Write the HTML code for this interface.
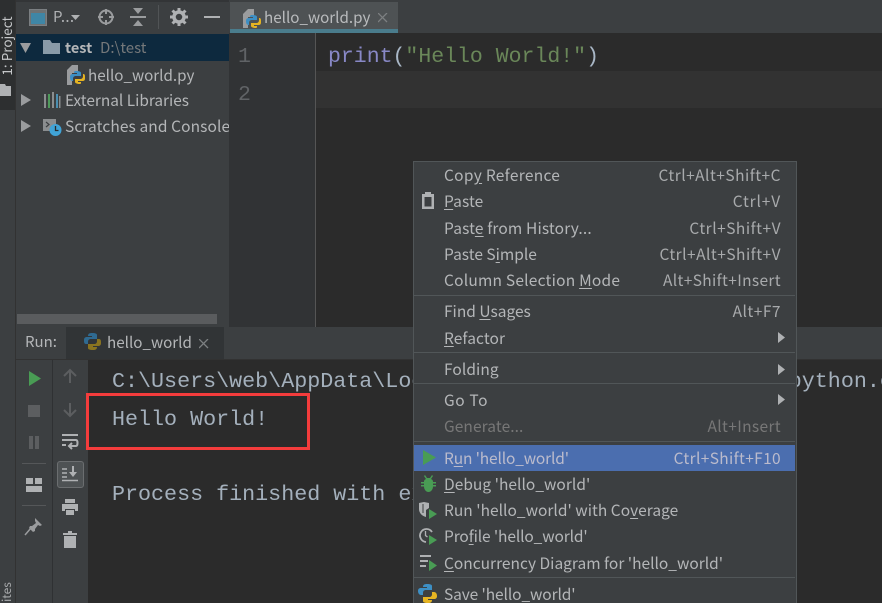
<!DOCTYPE html>
<html><head><meta charset="utf-8">
<style>
html,body{margin:0;padding:0;background:#2b2b2b}
#p{position:relative;width:882px;height:603px;overflow:hidden;background:#2b2b2b;font-family:"Noto Sans CJK SC","Liberation Sans",sans-serif;font-size:15px;color:#afb1b3}
#p div,#p svg{position:absolute}
.t{white-space:nowrap;line-height:20px;height:20px}
.m{font-family:"Liberation Mono",monospace;font-size:21.5px;white-space:nowrap;line-height:26px;color:#a9b7c6}
.c{font-size:21.7px;color:#a4b0bc}
.mi{color:#b4b6b8;font-size:15.5px;letter-spacing:.08px;white-space:nowrap;line-height:20px;height:20px;margin-top:-1px}
.sc{color:#a8aaac;font-size:15.5px;letter-spacing:.35px;white-space:nowrap;line-height:20px;height:20px;right:101px;text-align:right;margin-top:-1px}
u{text-underline-offset:2px}
</style></head><body><div id="p">
<!-- left strip -->
<div style="left:0;top:0;width:15px;height:603px;background:#3c3f41"></div>
<div style="left:15px;top:0;width:1px;height:603px;background:#323232"></div>
<div style="left:0;top:0;width:15px;height:110px;background:#2d2f30"></div>
<div class="t" style="left:-24px;top:36px;width:60px;transform:rotate(-90deg);font-size:13.5px;color:#c4c6c8;text-align:center">1: Project</div>
<svg style="left:0;top:82px" width="12" height="14"><path d="M0 2h5l1 2h5v10H0z" fill="#afb1b3"/></svg>
<div class="t" style="left:-3px;top:582px;width:20px;transform:rotate(-90deg);font-size:12px;color:#a9abad">ites</div>

<!-- project panel -->
<div style="left:16px;top:0;width:214px;height:327px;background:#3c3f41"></div>
<div style="left:16px;top:0;width:866px;height:2px;background:#333537"></div>
<svg style="left:29px;top:9px" width="20" height="18"><rect x="0.5" y="0.5" width="17" height="16" fill="#6e7274" stroke="#7b7f82"/><rect x="2" y="4" width="14" height="11" fill="#3f86a6"/></svg>
<div class="t" style="left:53px;top:7px;color:#afb1b3;font-size:15px;letter-spacing:.3px">P...</div>
<svg style="left:71px;top:15px" width="10" height="6"><path d="M0 0h9L4.500 5z" fill="#afb1b3"/></svg>
<svg style="left:97px;top:8px" width="18" height="18" fill="none" stroke="#9a9c9e" stroke-width="2"><circle cx="9" cy="9" r="6.500"/><path d="M9 1v5M9 12v5M1 9h5M12 9h5"/></svg>
<svg style="left:129px;top:7px" width="18" height="20"><path d="M1 10h16" stroke="#9a9c9e" stroke-width="2"/><path d="M4 1h10L9 7zM4 19h10L9 13z" fill="#9a9c9e"/></svg>
<div style="left:158px;top:5px;width:1px;height:24px;background:#515456"></div>
<svg style="left:170px;top:8px" width="18" height="18"><circle cx="9" cy="9" r="5" fill="none" stroke="#afb1b3" stroke-width="3.500"/><path d="M9 0v4M9 14v4M0 9h4M14 9h4M2.500 2.500l3 3M12.500 12.500l3 3M2.500 15.500l3-3M12.500 5.500l3-3" stroke="#afb1b3" stroke-width="3"/></svg>
<div style="left:204px;top:16px;width:16px;height:2px;background:#afb1b3"></div>

<div style="left:16px;top:34px;width:213px;height:27px;background:#0d293e"></div>
<svg style="left:20px;top:43px" width="12" height="11"><path d="M0 0h11L5.500 10z" fill="#9a9c9e"/></svg>
<svg style="left:43px;top:39px" width="18" height="16"><path d="M0 1h7l2 3h8v11H0z" fill="#8a9ba8"/></svg>
<div class="t" style="left:65px;top:38px;font-weight:700;color:#b4b6b8;font-size:14.500px">test</div>
<div class="t" style="left:100px;top:38px;color:#75787a;font-size:15px">D:\test</div>
<!-- file icon -->
<svg style="left:66px;top:64px" width="20" height="22"><path d="M1 9V6l5-5h6v8z" fill="#9a9c9e"/><path d="M1 9h5v12H1z" fill="#9a9c9e"/><path d="M10 7c4 0 5 1 5 2v3h-5c-2 0-3 1-3 3v2c-2 0-3-1-3-4s2-3 4-3h3v-1H8c0-1 0-2 2-2z" fill="#3d8fc4"/><path d="M14 20c-3 0-5-1-5-2v-3h5c2 0 3-1 3-3v-2c2 0 2 1 2 4s-1 3-4 3h-3v1h3c0 1 0 2-1 2z" fill="#e6b422"/></svg>
<div class="t" style="left:88px;top:65px;color:#b4b6b8;font-size:15.2px">hello_world.py</div>
<svg style="left:21px;top:94px" width="11" height="13"><path d="M0 0l10 6-10 6z" fill="#9a9c9e"/></svg>
<svg style="left:43px;top:92px" width="18" height="17"><path d="M1 2h2v14H1z" fill="#8a8d8f"/><path d="M5 2h2v14H5z" fill="#4f9a5b"/><path d="M9 0h2v16H9z" fill="#8a8d8f"/><path d="M13 2h2v14h-2z" fill="#4b8eb0"/><path d="M16 4h1.500v12H16z" fill="#8a8d8f"/></svg>
<div class="t" style="left:65px;top:90px;color:#b4b6b8;font-size:15.4px">External Libraries</div>
<svg style="left:21px;top:120px" width="11" height="13"><path d="M0 0l10 6-10 6z" fill="#9a9c9e"/></svg>
<svg style="left:43px;top:117px" width="20" height="20"><rect x="0" y="2" width="13" height="12" fill="#8a8d8f"/><path d="M3 5l3 2.500L3 10" stroke="#3c3f41" fill="none" stroke-width="1.200"/><circle cx="12.500" cy="13" r="6" fill="#40a3d6"/><path d="M12.500 9v4.500h3" stroke="#2b2b2b" fill="none" stroke-width="1.300"/></svg>
<div class="t" style="left:65px;top:116px;color:#b4b6b8;font-size:15.5px;letter-spacing:.1px;width:164px;overflow:hidden">Scratches and Consoles</div>
<div style="left:17px;top:314px;width:200px;height:10px;background:#5a5c5e"></div>

<!-- tab bar -->
<div style="left:229px;top:0;width:653px;height:33px;background:#3c3f41"></div>
<div style="left:230px;top:2px;width:168px;height:27px;background:#4e5254"></div>
<div style="left:230px;top:29px;width:168px;height:4px;background:#4a7c8c"></div>
<svg style="left:242px;top:8px" width="20" height="21"><path d="M1 9V6l5-5h6v8z" fill="#9a9c9e"/><path d="M1 9h5v11H1z" fill="#9a9c9e"/><path d="M10 7c4 0 5 1 5 2v3h-5c-2 0-3 1-3 3v2c-2 0-3-1-3-4s2-3 4-3h3v-1H8c0-1 0-2 2-2z" fill="#3d8fc4"/><path d="M14 20c-3 0-5-1-5-2v-3h5c2 0 3-1 3-3v-2c2 0 2 1 2 4s-1 3-4 3h-3v1h3c0 1 0 2-1 2z" fill="#e6b422"/></svg>
<div class="t" style="left:264px;top:7px;color:#b9bbbd;font-size:15.2px">hello_world.py</div>
<svg style="left:378px;top:13px" width="10" height="10"><path d="M0 0l9 9M9 0L0 9" stroke="#7d8082" stroke-width="1.300"/></svg>

<!-- editor -->
<div style="left:229px;top:33px;width:87px;height:294px;background:#313335"></div>
<div style="left:315px;top:33px;width:1px;height:294px;background:#555"></div>
<div style="left:316px;top:71px;width:566px;height:37px;background:#323232"></div>
<div class="m" style="left:238px;top:44px;color:#606366">1</div>
<div class="m" style="left:238px;top:82px;color:#606366">2</div>
<div class="m" style="left:328px;top:44px;color:#8888c6">print<span style="color:#a9b7c6">(</span><span style="color:#6a8759">"Hello World!"</span><span style="color:#a9b7c6">)</span></div>

<!-- run panel -->
<div style="left:16px;top:327px;width:866px;height:33px;background:#3c3f41"></div>
<div style="left:66px;top:327px;width:158px;height:32px;background:#313436"></div>
<div style="left:16px;top:359px;width:866px;height:1px;background:#323232"></div>
<div class="t" style="left:25px;top:332px;color:#b4b6b8;font-size:15px">Run:</div>
<svg style="left:83px;top:332px" width="20" height="20"><path d="M9 1c4 0 5 1 5 2v4H8c-2 0-3 1-3 3v2H3c-2 0-2-2-2-4s1-3 3-3h5V4H5c0-2 1-3 4-3z" fill="#2f6a91"/><path d="M10 18c-4 0-5-1-5-2v-4h6c2 0 3-1 3-3V7h2c2 0 2 2 2 4s-1 3-3 3h-5v1h4c0 2-1 3-4 3z" fill="#8a7420"/></svg>
<div class="t" style="left:107px;top:332px;color:#b4b6b8;font-size:15.2px">hello_world</div>
<svg style="left:199px;top:339px" width="10" height="10"><path d="M0 0l9 9M9 0L0 9" stroke="#7d8082" stroke-width="1.300"/></svg>

<div style="left:16px;top:360px;width:72px;height:243px;background:#3c3f41"></div>
<div style="left:52px;top:360px;width:1px;height:243px;background:#2f3133"></div>
<svg style="left:28px;top:371px" width="14" height="15"><path d="M1 0l12 7.500L1 15z" fill="#499c54"/></svg>
<div style="left:28px;top:405px;width:12px;height:12px;background:#5c5e60"></div>
<div style="left:29px;top:436px;width:4px;height:13px;background:#5c5e60"></div>
<div style="left:35px;top:436px;width:4px;height:13px;background:#5c5e60"></div>
<div style="left:22px;top:463px;width:24px;height:1px;background:#555759"></div>
<svg style="left:26px;top:478px" width="17" height="14"><path d="M0 0h7v6H0zM9 0h7v6H9zM0 8h16v6H0z" fill="#afb1b3"/></svg>
<div style="left:22px;top:505px;width:24px;height:1px;background:#555759"></div>
<svg style="left:24px;top:516px" width="20" height="22"><path d="M11 2l7 7-2 1-2-1-3 4 0 2-2 1-4-4 1-2 2 0 4-3-1-2z" fill="#9a9c9e"/><path d="M7 12L1 19" stroke="#9a9c9e" stroke-width="1.500"/></svg>

<svg style="left:63px;top:368px" width="14" height="16"><path d="M7 15V2M1 8l6-6 6 6" fill="none" stroke="#5c5e60" stroke-width="2"/></svg>
<svg style="left:63px;top:402px" width="14" height="16"><path d="M7 1v13M1 8l6 6 6-6" fill="none" stroke="#5c5e60" stroke-width="2"/></svg>
<svg style="left:61px;top:433px" width="18" height="18"><path d="M1 2h16M1 7h14c2 0 2 6 0 6H9" fill="none" stroke="#afb1b3" stroke-width="2"/><path d="M11 10l-3 3 3 3" fill="none" stroke="#afb1b3" stroke-width="2"/><path d="M1 12h4" stroke="#afb1b3" stroke-width="2"/></svg>
<div style="left:57px;top:461px;width:27px;height:27px;background:#4e5254;border:1px solid #6b6e70;border-radius:3px;box-sizing:border-box"></div>
<svg style="left:62px;top:466px" width="16" height="16"><path d="M0 3h5M0 7h5M0 11h5M0 14.500h16" stroke="#afb1b3" stroke-width="1.600"/><path d="M11 0v8" stroke="#afb1b3" stroke-width="2"/><path d="M7 6h8l-4 5z" fill="#afb1b3"/></svg>
<svg style="left:62px;top:499px" width="16" height="16"><path d="M3 0h10v4H3zM0 5h16v7h-3v-2H3v2H0zM4 11h8v5H4z" fill="#afb1b3"/></svg>
<svg style="left:63px;top:531px" width="14" height="17"><path d="M0 2h14v2H0zM5 0h4v2H5zM1 5h12v12H1z" fill="#afb1b3"/></svg>

<!-- console -->
<div class="m c" style="left:112px;top:369px">C:\Users\web\AppData\Local\Programs\Python\Python37\python.exe</div>
<div class="m c" style="left:112px;top:407px">Hello World!</div>
<div class="m c" style="left:112px;top:482px">Process finished with exit code 0</div>
<div style="left:86px;top:393px;width:224px;height:57px;border:3px solid #f43c3c;box-sizing:border-box"></div>

<!-- context menu -->
<div style="left:413px;top:161px;width:384px;height:442px;background:#3c3f41;border:1px solid #515658;box-sizing:border-box;border-bottom:0"></div>
<div style="left:414px;top:295px;width:381px;height:1px;background:#515658"></div>
<div style="left:414px;top:352px;width:381px;height:1px;background:#515658"></div>
<div style="left:414px;top:383px;width:381px;height:1px;background:#515658"></div>
<div style="left:414px;top:441px;width:381px;height:1px;background:#515658"></div>
<div style="left:414px;top:577px;width:381px;height:1px;background:#515658"></div>
<div style="left:414px;top:445px;width:381px;height:26px;background:#4b6eaf"></div>

<div class="mi" style="left:444px;top:166px;letter-spacing:.29px">Cop<u>y</u> Reference</div><div class="sc" style="top:166px;letter-spacing:.48px">Ctrl+Alt+Shift+C</div>
<svg style="left:421px;top:192px" width="14" height="17"><path d="M4 0h6v2h3v15H1V2h3z" fill="#afb1b3"/><rect x="3.500" y="5" width="7" height="9.500" fill="#3c3f41"/></svg>
<div class="mi" style="left:444px;top:192px"><u>P</u>aste</div><div class="sc" style="top:192px;letter-spacing:.85px">Ctrl+V</div>
<div class="mi" style="left:444px;top:219px;letter-spacing:.14px">Past<u>e</u> from History...</div><div class="sc" style="top:219px;letter-spacing:.5px">Ctrl+Shift+V</div>
<div class="mi" style="left:444px;top:245px;letter-spacing:0">Paste S<u>i</u>mple</div><div class="sc" style="top:245px;letter-spacing:.48px">Ctrl+Alt+Shift+V</div>
<div class="mi" style="left:444px;top:271px;letter-spacing:.22px">Column Selection <u>M</u>ode</div><div class="sc" style="top:271px">Alt+Shift+Insert</div>
<div class="mi" style="left:444px;top:302px;letter-spacing:0">Find <u>U</u>sages</div><div class="sc" style="top:302px;letter-spacing:.5px">Alt+F7</div>
<div class="mi" style="left:444px;top:329px"><u>R</u>efactor</div>
<svg style="left:778px;top:332px" width="8" height="12"><path d="M0 0l7 5.500L0 11z" fill="#afb1b3"/></svg>
<div class="mi" style="left:444px;top:360px">Folding</div>
<svg style="left:778px;top:364px" width="8" height="12"><path d="M0 0l7 5.500L0 11z" fill="#afb1b3"/></svg>
<div class="mi" style="left:444px;top:391px;letter-spacing:.6px">Go To</div>
<svg style="left:778px;top:394px" width="8" height="12"><path d="M0 0l7 5.500L0 11z" fill="#afb1b3"/></svg>
<div class="mi" style="left:444px;top:417px;color:#777">Generate...</div><div class="sc" style="top:417px;color:#777">Alt+Insert</div>
<svg style="left:423px;top:450px" width="14" height="15"><path d="M0 0l13 7.500L0 15z" fill="#499c54"/></svg>
<div class="mi" style="left:444px;top:449px;color:#bbc;letter-spacing:-.15px">R<u>u</u>n 'hello_world'</div><div class="sc" style="top:449px;color:#bbc">Ctrl+Shift+F10</div>
<svg style="left:420px;top:475px" width="17" height="18"><path d="M5 0l2 3h3l2-3 1 1-2 3c2 1 2 2 2 3h3v1.500h-3V10h3v1.500h-3c0 3-2 5.500-4.500 5.500S4 14.500 4 11.500H1V10h3V8.500H1V7h3c0-1 0-2 2-3L4 1z" fill="#499c54"/></svg>
<div class="mi" style="left:444px;top:475px;letter-spacing:.03px"><u>D</u>ebug 'hello_world'</div>
<svg style="left:418px;top:501px" width="20" height="19"><path d="M1 2l5-1 5 1v5l-3 2v7c-4-1-7-4-7-8z" fill="#afb1b3"/><path d="M11 8l8 5-8 5z" fill="#499c54"/><path d="M5 3v9" stroke="#3c3f41"/></svg>
<div class="mi" style="left:444px;top:501px;letter-spacing:.02px">Run 'hello_world' with Co<u>v</u>erage</div>
<svg style="left:418px;top:527px" width="20" height="19"><path d="M14 5A6.500 6.500 0 1 0 8 15" fill="none" stroke="#afb1b3" stroke-width="1.800"/><path d="M7.500 4v4.500l2 1.500" fill="none" stroke="#afb1b3" stroke-width="1.300"/><path d="M11 8l8 5-8 5z" fill="#499c54"/></svg>
<div class="mi" style="left:444px;top:527px;letter-spacing:-.12px">Pro<u>f</u>ile 'hello_world'</div>
<svg style="left:420px;top:554px" width="18" height="19"><path d="M0 1h11v2H0zM0 6h8v2H0zM0 11h6v2H0z" fill="#afb1b3"/><path d="M9 6l8 5.500-8 5.500z" fill="#499c54"/></svg>
<div class="mi" style="left:444px;top:554px;letter-spacing:0"><u>C</u>oncurrency Diagram for 'hello_world'</div>
<svg style="left:418px;top:584px" width="19" height="19"><path d="M9 0c4 0 5 1 5 2v4H8c-2 0-3 1-3 3v2H3c-2 0-3-2-3-4s1-3 3-3h6V3H5c0-2 1-3 4-3z" fill="#3d8fc4"/><path d="M10 19c-4 0-5-1-5-2v-4h6c2 0 3-1 3-3V8h2c2 0 3 2 3 4s-1 3-3 3h-6v1h4c0 2-1 3-4 3z" fill="#e6b422"/></svg>
<div class="mi" style="left:444px;top:585px;letter-spacing:-.1px">Save 'hello_world'</div>
</div></body></html>
